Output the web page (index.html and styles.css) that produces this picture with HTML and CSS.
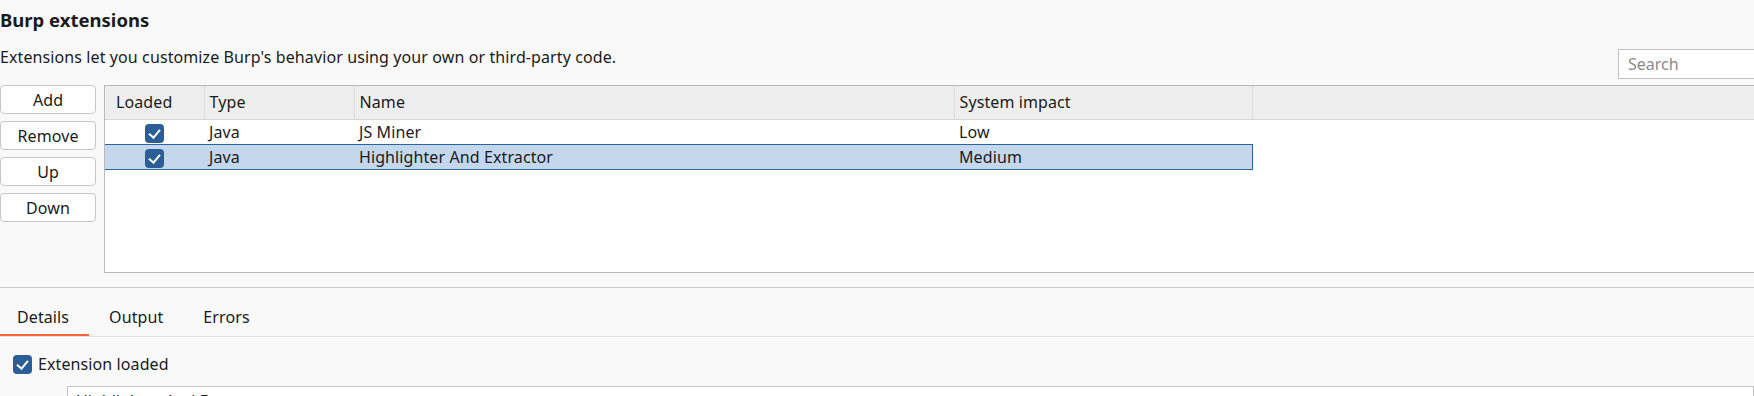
FILE: index.html
```html
<!DOCTYPE html>
<html lang="en">
<head>
  <meta charset="UTF-8">
  <title>Burp extensions</title>
  <link rel="stylesheet" href="styles.css">
</head>
<body>
  <div class="page">
    <div class="head">
      <div class="head-text">
        <h1>Burp extensions</h1>
        <p>Extensions let you customize Burp's behavior using your own or third-party code.</p>
      </div>
      <input class="search" type="text" placeholder="Search">
    </div>

    <div class="main">
      <div class="btn-col">
        <button>Add</button>
        <button>Remove</button>
        <button>Up</button>
        <button>Down</button>
      </div>
      <div class="table-wrap">
        <table class="ext-table">
          <colgroup>
            <col class="c-loaded">
            <col class="c-type">
            <col class="c-name">
            <col class="c-impact">
            <col>
          </colgroup>
          <thead>
            <tr>
              <th class="first">Loaded</th>
              <th>Type</th>
              <th>Name</th>
              <th>System impact</th>
              <th class="filler"></th>
            </tr>
          </thead>
          <tbody>
            <tr>
              <td class="center"><span class="check"></span></td>
              <td>Java</td>
              <td>JS Miner</td>
              <td>Low</td>
              <td class="filler"></td>
            </tr>
            <tr class="selected">
              <td class="center"><span class="check"></span></td>
              <td>Java</td>
              <td>Highlighter And Extractor</td>
              <td class="last">Medium</td>
              <td class="filler"></td>
            </tr>
          </tbody>
        </table>
      </div>
    </div>

    <div class="details">
      <div class="tabs">
        <div class="tab active">Details</div>
        <div class="tab">Output</div>
        <div class="tab">Errors</div>
      </div>
      <label class="check-row"><span class="check"></span>Extension loaded</label>
      <div class="name-row">
        <span class="name-label">Name:</span>
        <input class="name-input" type="text" value="Highlighter And Extractor">
      </div>
    </div>
  </div>
</body>
</html>
```

FILE: styles.css
```css
/* Base */
* {
  margin: 0;
  padding: 0;
  box-sizing: border-box;
}

body {
  font-family: 'Noto Sans', 'Open Sans', sans-serif;
  font-size: 16px;
  letter-spacing: 0.1px;
  color: #1b1b1b;
  background-color: #f9f9f9;
  overflow: hidden;
  height: 396px;
}

.page {
  width: 100%;
  height: 396px;
  overflow: hidden;
}

/* Header */
.head {
  display: flex;
  justify-content: space-between;
  align-items: flex-start;
  height: 85px;
  overflow: hidden;
}

.head h1 {
  font-size: 18.5px;
  font-weight: 700;
  line-height: 24px;
  margin-top: 8px;
  letter-spacing: 0;
}

.head p {
  line-height: 22px;
  margin-top: 14px;
}

.search {
  width: 160px;
  height: 30px;
  margin-top: 49px;
  margin-right: -24px;
  padding: 0 9px;
  border: 1px solid #c4c4c4;
  background-color: #fff;
  font-family: inherit;
  font-size: 16px;
  color: #1b1b1b;
  outline: none;
}

.search::placeholder {
  color: #8a8a8a;
}

/* Buttons + table */
.main {
  display: flex;
  gap: 8px;
  height: 188px;
}

.btn-col {
  display: flex;
  flex-direction: column;
  gap: 7px;
  width: 96px;
  flex-shrink: 0;
}

.btn-col button {
  height: 29px;
  border: 1px solid #c6c6c6;
  border-radius: 4px;
  background-color: #fff;
  font-family: inherit;
  font-size: 16px;
  letter-spacing: 0.1px;
  color: #1b1b1b;
}

.table-wrap {
  flex: 1;
  background-color: #fff;
  border-top: 1px solid #b9b9b9;
  border-left: 1px solid #b9b9b9;
  border-bottom: 1px solid #b9b9b9;
  overflow: hidden;
}

.ext-table {
  width: 100%;
  border-collapse: collapse;
  table-layout: fixed;
}

.c-loaded { width: 99px; }
.c-type { width: 150px; }
.c-name { width: 600px; }
.c-impact { width: 298px; }

.ext-table th {
  height: 33px;
  padding: 0 5px;
  text-align: left;
  font-weight: 400;
  background-color: #eeeeee;
  border-right: 1px solid #dcdcdc;
  border-bottom: 1px solid #d6d6d6;
  white-space: nowrap;
}

.ext-table th.first {
  padding-left: 11px;
}

.ext-table th.filler {
  border-right: none;
}

.ext-table td {
  height: 25px;
  padding: 0 5px;
  white-space: nowrap;
}

.ext-table td.center {
  text-align: center;
  padding: 0;
}

.ext-table tr.selected td {
  background-color: #c5d7ec;
  border-top: 1px solid #2c64a0;
  border-bottom: 1px solid #2c64a0;
}

.ext-table tr.selected td.last {
  border-right: 1px solid #2c64a0;
}

.ext-table tr.selected td.filler {
  background-color: #fff;
  border: none;
}

.check {
  display: inline-block;
  width: 19px;
  height: 19px;
  border-radius: 4px;
  background-color: #2b5e97;
  vertical-align: middle;
  position: relative;
}

.check::after {
  content: "";
  position: absolute;
  left: 6px;
  top: 3px;
  width: 5px;
  height: 9px;
  border-right: 2px solid #fff;
  border-bottom: 2px solid #fff;
  transform: rotate(40deg);
}

/* Details */
.details {
  margin-top: 14px;
  border-top: 1px solid #c9c9c9;
}

.tabs {
  display: flex;
  height: 49px;
  align-items: flex-end;
  border-bottom: 1px solid #e2e2e2;
  margin-left: -3px;
}

.tab {
  padding: 0 20px;
  height: 33px;
  line-height: 28px;
}

.tab.active {
  border-bottom: 2px solid #ff6633;
}

.check-row {
  display: flex;
  align-items: center;
  gap: 6px;
  margin: 17px 0 0 13px;
  height: 20px;
}

.name-row {
  display: flex;
  align-items: flex-start;
  margin-top: 12px;
}

.name-label {
  width: 67px;
  padding: 7px 0 0 12px;
  flex-shrink: 0;
}

.name-input {
  flex: 1;
  height: 30px;
  padding: 0 8px;
  border: 1px solid #c4c4c4;
  background-color: #fff;
  font-family: inherit;
  font-size: 16px;
  color: #1b1b1b;
}
```
